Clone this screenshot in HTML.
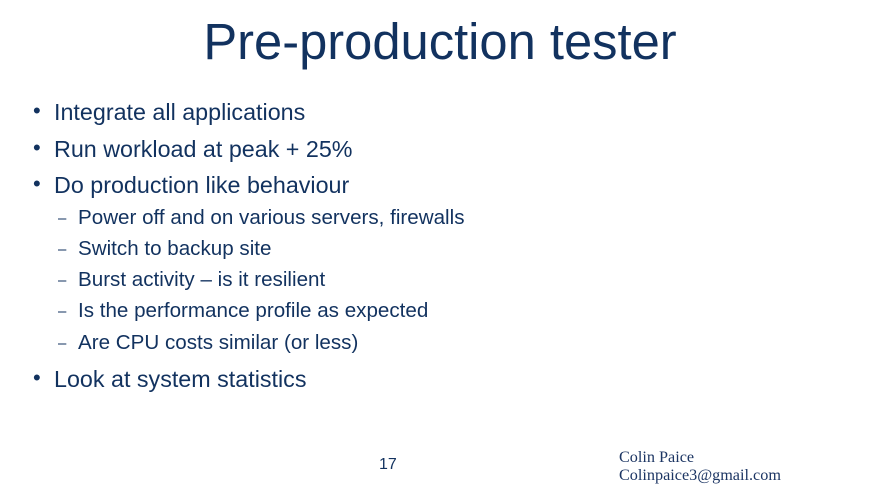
<!DOCTYPE html>
<html><head><meta charset="utf-8"><style>
body{margin:0;width:889px;height:485px;background:#fff;overflow:hidden;position:relative;font-family:"Liberation Sans",sans-serif;color:#12325f}
.a{position:absolute;white-space:nowrap;line-height:1}
.t{font-size:50.7px;left:0;width:880px;text-align:center;top:17px}
.b{font-size:23.3px;left:54px}
.bd{position:absolute;left:-21px;font-size:22px;top:-1px}
.s{font-size:20.6px;left:78px}
.sd{position:absolute;left:-20px;font-size:15px;top:3px}
.f{font-family:"Liberation Serif",serif;font-size:16.2px;color:#1c3563}
</style></head><body>
<div class="a t">Pre-production tester</div>
<div class="a b" style="top:101px"><span class="bd">•</span>Integrate all applications</div>
<div class="a b" style="top:138px"><span class="bd">•</span>Run workload at peak + 25%</div>
<div class="a b" style="top:174px"><span class="bd">•</span>Do production like behaviour</div>
<div class="a s" style="top:208px"><span class="sd">–</span>Power off and on various servers, firewalls</div>
<div class="a s" style="top:239px"><span class="sd">–</span>Switch to backup site</div>
<div class="a s" style="top:270px"><span class="sd">–</span>Burst activity – is it resilient</div>
<div class="a s" style="top:301px"><span class="sd">–</span>Is the performance profile as expected</div>
<div class="a s" style="top:333px"><span class="sd">–</span>Are CPU costs similar (or less)</div>
<div class="a b" style="top:368px"><span class="bd">•</span>Look at system statistics</div>
<div class="a" style="left:379px;top:457px;font-size:16px">17</div>
<div class="a f" style="left:619px;top:449px">Colin Paice</div>
<div class="a f" style="left:619px;top:467px">Colinpaice3@gmail.com</div>
</body></html>
